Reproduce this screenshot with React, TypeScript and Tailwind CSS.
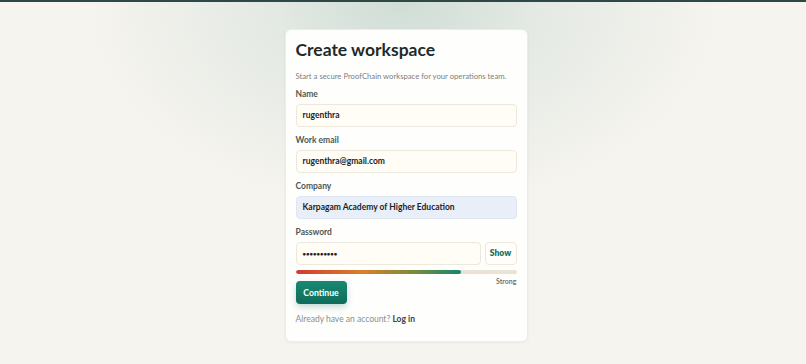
import React from "react";

const font = { fontFamily: 'Lato, "Noto Sans", sans-serif' };

function Label({ children }: { children: React.ReactNode }) {
  return <div className="text-[8.5px] font-bold text-[#4f5754] h-[10px] leading-[10px] mb-[5px]">{children}</div>;
}

export default function App() {
  return (
    <div
      className="w-full h-[364px] overflow-hidden border-t-2 border-[#2d4845] bg-[#f6f4ef] bg-[radial-gradient(ellipse_320px_210px_at_50%_0%,#d0ddd7_0%,#e5eae4_45%,#f6f4ef_100%)]"
      style={font}
    >
      <div className="flex justify-center pt-[27px] pl-[6px]">
        <div className="w-[243px] h-[313px] rounded-[6px] bg-[#fefefd] border border-[#efece4] shadow-[0_1px_3px_rgba(0,0,0,0.05)] px-[10px] pt-[7px]">
          <h1 className="text-[17.5px] font-bold text-[#1f2a29] leading-[26px]">Create workspace</h1>
          <p className="mt-[7px] text-[7.7px] text-[#7b817e] leading-[12px] whitespace-nowrap">Start a secure ProofChain workspace for your operations team.</p>
          <div className="mt-[7px]">
            <Label>Name</Label>
            <div className="h-[23px] rounded-[4px] border border-[#ece8dc] bg-[#fffdf6] flex items-center px-[6px] text-[8.5px] font-bold text-[#1e2322]">rugenthra</div>
          </div>
          <div className="mt-[8px]">
            <Label>Work email</Label>
            <div className="h-[23px] rounded-[4px] border border-[#ece8dc] bg-[#fffdf6] flex items-center px-[6px] text-[8.5px] font-bold text-[#1e2322]">rugenthra@gmail.com</div>
          </div>
          <div className="mt-[8px]">
            <Label>Company</Label>
            <div className="h-[23px] rounded-[4px] border border-[#dfe6f2] bg-[#e8eff9] flex items-center px-[6px] text-[8.5px] font-bold text-[#1e2322]">Karpagam Academy of Higher Education</div>
          </div>
          <div className="mt-[8px]">
            <Label>Password</Label>
            <div className="flex gap-[4px]">
              <div className="flex-1 h-[23px] rounded-[4px] border border-[#ece8dc] bg-[#fffdf6] flex items-center px-[6px] text-[6px] font-bold text-[#1e2322]">••••••••••</div>
              <div className="w-[32px] h-[23px] rounded-[4px] border border-[#ece8dc] bg-[#fffefb] flex items-center justify-center text-[8.5px] font-extrabold text-[#17705f]">Show</div>
            </div>
          </div>
          <div className="mt-[5px] h-[4px] rounded-full bg-[#e9e2d5] overflow-hidden">
            <div className="h-full w-[75%] rounded-full bg-[linear-gradient(90deg,#d63a30_0%,#d7802a_40%,#7f8a3a_70%,#13876f_100%)]" />
          </div>
          <div className="mt-[2px] text-right text-[7px] font-bold text-[#6f7672] leading-[10px]">Strong</div>
          <div className="-mt-[5px] w-[51px] h-[23px] rounded-[4px] bg-[linear-gradient(180deg,#178a72,#0f6b5a)] shadow-[0_3px_6px_rgba(16,110,90,0.25)] flex items-center justify-center text-[8.7px] font-bold text-white">Continue</div>
          <div className="mt-[9px] text-[8.5px] text-[#8a8f8b] leading-[12px]">
            Already have an account? <span className="font-bold text-[#3b4442]">Log in</span>
          </div>
        </div>
      </div>
    </div>
  );
}
